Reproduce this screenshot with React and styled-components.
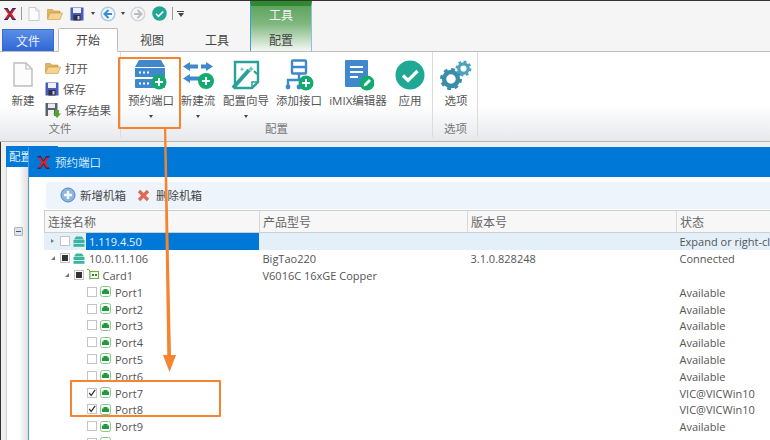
import React from "react";
import styled, { createGlobalStyle } from "styled-components";

const BLUE = "#0078d7";
const ORANGE = "#f6832f";
const GREEN = "#12ab6f";
const TEAL = "#1fa894";
const STEEL = "#3f88cc";

const GlobalStyle = createGlobalStyle`
  html, body {
    margin: 0;
    padding: 0;
    overflow: hidden;
    background: #fff;
  }
  * { box-sizing: border-box; }
`;

const Page = styled.div`
  position: relative;
  width: 770px;
  height: 440px;
  overflow: hidden;
  display: flex;
  flex-direction: column;
  font-family: "Open Sans", "Noto Sans CJK SC", sans-serif;
  font-size: 11.5px;
  color: #555;
`;

const TitleBar = styled.div`
  display: flex;
  height: 52px;
  flex: none;
  background: #f5f5f5;
  border-top: 1px solid #333;
  border-bottom: 1px solid #bdbdbd;
`;

const TitleLeft = styled.div`
  width: 250px;
  display: flex;
  flex-direction: column;
`;

const QuickAccess = styled.div`
  height: 27px;
  display: flex;
  align-items: center;
  padding: 0 0 2px 3px;
`;

const QuickItem = styled.span`
  display: flex;
  margin-left: ${(p) => p.$gap || 0}px;
`;

const QuickBar = styled.span`
  width: 1px;
  height: 13px;
  background: #999;
  margin-left: ${(p) => p.$gap}px;
`;

const Caret = styled.span`
  width: 0;
  height: 0;
  border-left: 2.5px solid transparent;
  border-right: 2.5px solid transparent;
  border-top: 3px solid #444;
  margin-left: ${(p) => p.$gap || 0}px;
`;

const QuickMenu = styled.span`
  display: flex;
  flex-direction: column;
  align-items: center;
  gap: 1px;
  margin-left: ${(p) => p.$gap}px;
  &::before {
    content: "";
    width: 7px;
    height: 1px;
    background: #444;
  }
  &::after {
    content: "";
    width: 0;
    height: 0;
    border-left: 3.5px solid transparent;
    border-right: 3.5px solid transparent;
    border-top: 4px solid #444;
  }
`;

const TabRow = styled.div`
  flex: 1;
  display: flex;
  align-items: flex-end;
  padding-left: 2px;
  margin-bottom: -1px;
`;

const FileTab = styled.div`
  width: 52px;
  height: 23px;
  display: flex;
  align-items: center;
  justify-content: center;
  color: #e8f0ff;
  font-size: 12px;
  background: linear-gradient(#5b8ee6, #2f66d8);
  border: 1px solid #3d6cc8;
  border-bottom: 1px solid #bdbdbd;
`;

const Tab = styled.div`
  width: ${(p) => p.$w}px;
  margin-left: ${(p) => p.$gap || 0}px;
  height: 24px;
  display: flex;
  align-items: center;
  justify-content: center;
  font-size: 12px;
  color: #444;
  ${(p) =>
    p.$active
      ? `background: #fff; border: 1px solid #bdbdbd; border-bottom: 1px solid #fff; border-radius: 2px 2px 0 0;`
      : ""}
`;

const ContextTab = styled.div`
  width: 62px;
  display: flex;
  flex-direction: column;
  align-items: center;
  border-left: 1px solid #3ba0d0;
  border-right: 1px solid #8cc4de;
  background: linear-gradient(#5fa35f 0, #7fb87f 40%, #f4f8f4 100%);
  border-top: 5px solid #2f8a2f;
  color: #444;
  font-size: 12px;
`;

const ContextTitle = styled.div`
  height: 18px;
  display: flex;
  align-items: center;
  color: #f2f6f2;
`;

const ContextName = styled.div`
  margin-top: 7px;
`;

const Ribbon = styled.div`
  height: 90px;
  flex: none;
  display: flex;
  background: linear-gradient(#fff 0, #fff 60%, #e6e8ec 100%);
  border-bottom: 1px solid #b5b5b5;
`;

const Group = styled.div`
  width: ${(p) => p.$w}px;
  flex: none;
  display: flex;
  flex-direction: column;
  align-items: center;
  margin-right: ${(p) => p.$gap || 0}px;
  padding-top: 4px;
  border-right: 1px solid #dcdcdf;
  margin-bottom: 4px;
`;

const GroupBody = styled.div`
  flex: 1;
  display: flex;
  width: 100%;
`;

const GroupLabel = styled.div`
  height: 15px;
  line-height: 14px;
  color: #777;
  text-align: center;
`;

const BigButton = styled.div`
  width: ${(p) => p.$w}px;
  flex: none;
  display: flex;
  flex-direction: column;
  align-items: center;
`;

const BigIcon = styled.div`
  height: 37px;
  display: flex;
  align-items: center;
  justify-content: center;
`;

const BigLabel = styled.div`
  white-space: nowrap;
  line-height: 16px;
  height: 16px;
`;

const BigCaret = styled(Caret)`
  margin-top: 6px;
`;

const SmallList = styled.div`
  display: flex;
  flex-direction: column;
  margin-top: 4px;
  gap: 5px;
  margin-left: -1px;
`;

const SmallButton = styled.div`
  height: 16px;
  display: flex;
  align-items: center;
  gap: 4px;
  white-space: nowrap;
`;

const Workspace = styled.div`
  position: relative;
  flex: 1;
  background: #efefef;
  padding: 4px 0 0 5px;
  border-left: 1px solid #333;
`;

const BackTab = styled.div`
  width: 52px;
  height: 21px;
  background: ${BLUE};
  color: #e6f1fb;
  padding: 2px 0 0 3px;
`;

const BackPanel = styled.div`
  height: 280px;
  width: 24px;
  background: linear-gradient(90deg, #fff 0, #fff 50%, #d8d8d8 100%);
  border-left: 1px solid #d0d0d0;
  display: flex;
  justify-content: center;
  padding-top: 60px;
`;

const Collapse = styled.span`
  width: 9px;
  height: 9px;
  border: 1px solid #aab4c0;
  border-radius: 1px;
  background: #dfe5ec;
  display: flex;
  align-items: center;
  justify-content: center;
  &::after {
    content: "";
    width: 5px;
    height: 1px;
    background: #556;
  }
`;

const Dialog = styled.div`
  position: absolute;
  left: 27px;
  top: 5px;
  right: 0;
  bottom: 0;
  background: #fff;
  border-left: 1px solid #4a9be0;
  display: flex;
  flex-direction: column;
`;

const DialogHeader = styled.div`
  height: 30px;
  flex: none;
  background: ${BLUE};
  display: flex;
  align-items: center;
  gap: 4px;
  padding-left: 7px;
  color: #d6e8f8;
`;

const DialogBody = styled.div`
  flex: 1;
  display: flex;
  flex-direction: column;
  padding: 5px 0 0 15px;
`;

const Toolbar = styled.div`
  height: 27px;
  flex: none;
  margin-left: 2px;
  background: #edf4fc;
  border-radius: 4px 0 0 4px;
  display: flex;
  align-items: center;
  padding: 0 0 1px 14px;
  color: #444;
`;

const ToolButton = styled.div`
  display: flex;
  align-items: center;
  gap: ${(p) => p.$iconGap}px;
  margin-right: 11px;
  white-space: nowrap;
`;

const Grid = styled.div`
  flex: 1;
  margin-top: 1px;
  overflow: hidden;
`;

const HeaderRow = styled.div`
  height: 23px;
  display: flex;
  background: #f7f7f7;
  border-top: 1px solid #cfcfcf;
  border-bottom: 1px solid #cfcfcf;
  border-left: 1px solid #cfcfcf;
  color: #666;
  font-size: 12px;
`;

const HeaderCell = styled.div`
  width: ${(p) => p.$w}px;
  flex: none;
  display: flex;
  align-items: center;
  padding-left: 3px;
  border-right: 1px solid #d8d8d8;
`;

const Row = styled.div`
  height: 16.8px;
  display: flex;
  align-items: center;
  white-space: nowrap;
  font-size: 11px;
  background: ${(p) => (p.$selected ? "#e3f0fa" : "#fff")};
`;

const NameCell = styled.div`
  width: 215px;
  height: 100%;
  flex: none;
  display: flex;
  align-items: center;
  padding-left: ${(p) => p.$level * 13.5 + 4}px;
`;

const Expander = styled.span`
  width: 9px;
  flex: none;
  display: flex;
  justify-content: center;
  ${(p) => (p.$hidden ? "visibility: hidden;" : "")}
  &::after {
    content: "";
    width: 0;
    height: 0;
    ${(p) =>
      p.$open
        ? `border-bottom: 4px solid #777; border-left: 4px solid transparent; margin-left: 1px;`
        : `border-left: 3px solid #777; border-top: 2.5px solid transparent; border-bottom: 2.5px solid transparent;`}
  }
`;

const Check = styled.span`
  width: 10px;
  height: 10px;
  flex: none;
  margin-left: 3px;
  border: 1px solid #c4c4c4;
  background: #fff;
  display: flex;
  align-items: center;
  justify-content: center;
  ${(p) =>
    p.$state === "partial"
      ? `&::after { content: ""; width: 6px; height: 6px; background: #333; }`
      : ""}
`;

const NodeIcon = styled.span`
  display: flex;
  margin-left: 3px;
`;

const NodeName = styled.span`
  margin-left: 1px;
  padding: 1px 3px 0;
  height: 100%;
  flex: ${(p) => (p.$selected ? 1 : "none")};
  display: flex;
  align-items: center;
  ${(p) => (p.$selected ? `background: ${BLUE}; color: #e8f2fb;` : "")}
`;

const TextCell = styled.div`
  width: ${(p) => p.$w}px;
  flex: none;
  padding: 1px 0 0 3.5px;
`;

const HighlightBox = styled.div`
  position: absolute;
  left: ${(p) => p.$x}px;
  top: ${(p) => p.$y}px;
  width: ${(p) => p.$w}px;
  height: ${(p) => p.$h}px;
  border: 2px solid ${ORANGE};
  border-radius: 1px;
  pointer-events: none;
`;

const ArrowLayer = styled.svg`
  position: absolute;
  left: 0;
  top: 0;
  pointer-events: none;
`;

/* icons */
const Svg = ({ w, h = w, children }) => (
  <svg width={w} height={h} viewBox={`0 0 ${w} ${h}`} fill="none">
    {children}
  </svg>
);

const LogoIcon = ({ size = 14 }) => (
  <svg width={size} height={size} viewBox="0 0 14 14">
    <path d="M1 1h3.4l2.6 4 2.6-4H13L9 7l4 6H9.6L7 9l-2.6 4H1l4-6z" fill="#d8232a" />
    <path d="M1 1h3.4L7 5l2.6-4H13l-.9 1.3H9.8L7 6.4 4.2 2.3H1.9zM1 13h3.4L7 9l2.6 4H13l-.9-1.3H9.8L7 7.6l-2.8 4.1H1.9z" fill="#1d2f6f" />
  </svg>
);

const DocIcon = ({ w, h }) => (
  <svg width={w} height={h} viewBox="0 0 20 25" fill="none">
    <path d="M1 1h12l6 6v17H1z" fill="#fcfcfc" stroke="#bdbdbd" strokeWidth="1.4" />
    <path d="M13 1v6h6" stroke="#bdbdbd" strokeWidth="1.2" />
  </svg>
);

const FolderIcon = ({ w, h }) => (
  <svg width={w} height={h} viewBox="0 0 16 12">
    <path d="M0.5 1.5h5l1.5 1.5h6v2H3L0.5 10.5z" fill="#e2b566" stroke="#c79540" strokeWidth="0.6" />
    <path d="M3 5h12.5l-2.5 6.5H0.5z" fill="#f4d48f" stroke="#c79540" strokeWidth="0.6" />
  </svg>
);

const SaveIcon = ({ s = 14 }) => (
  <svg width={s} height={s} viewBox="0 0 14 14">
    <rect x="0.5" y="0.5" width="13" height="13" fill="#4a5db5" />
    <rect x="3" y="1" width="8" height="5" fill="#eef1fb" />
    <rect x="3.5" y="8" width="7" height="5.5" fill="#2d2f45" />
    <rect x="7.5" y="9" width="2" height="3.5" fill="#c9cfe8" />
  </svg>
);

const SaveAsIcon = () => (
  <svg width="16" height="16" viewBox="0 0 16 16">
    <rect x="0.5" y="1" width="12" height="13" fill="#59626f" />
    <rect x="3" y="1.5" width="7" height="4.5" fill="#e9ebee" />
    <rect x="3" y="8" width="6" height="6" fill="#eef0f2" />
    <path d="M10 8h4v3.5h2L12 16l-4-4.5h2z" fill="#55a332" />
  </svg>
);

const NavIcon = ({ color, ring, back }) => (
  <Svg w={16}>
    <circle cx="8" cy="8" r="6.8" fill="#f4f8fc" stroke={ring} strokeWidth="1.6" />
    <path
      d={back ? "M8.5 4L4.5 8l4 4M4.8 8H12" : "M7.5 4l4 4-4 4M11.2 8H4"}
      stroke={color}
      strokeWidth="2"
    />
  </Svg>
);

const CheckCircle = ({ s }) => (
  <svg width={s} height={s} viewBox="0 0 30 30">
    <circle cx="15" cy="15" r="14.5" fill={TEAL} />
    <path d="M8 15.5l5 5 9.5-9.5" stroke="#fff" strokeWidth="3.2" fill="none" />
  </svg>
);

const PlusBadge = ({ cx, cy, r = 7.5 }) => (
  <g>
    <circle cx={cx} cy={cy} r={r} fill={GREEN} />
    <path d={`M${cx - 4} ${cy}h8M${cx} ${cy - 4}v8`} stroke="#fff" strokeWidth="2" />
  </g>
);

const ServerIcon = () => (
  <Svg w={34} h={32}>
    <path d="M5 1h22l4 7H1z" fill={STEEL} />
    <rect x="1" y="9" width="30" height="9" fill={STEEL} />
    <rect x="1" y="20" width="30" height="9" rx="1" fill={STEEL} />
    <path d="M5 13.5h2M9 13.5h2M13 13.5h2M5 24.5h2M9 24.5h2M13 24.5h2" stroke="#fff" strokeWidth="2" />
    <PlusBadge cx={25} cy={23} />
  </Svg>
);

const FlowIcon = () => (
  <Svg w={32} h={30}>
    <path d="M8 2L1 6.5 8 11V8.5h8v-4H8z" fill={STEEL} />
    <path d="M24 2l7 4.5-7 4.5V8.5h-5v-4h5z" fill={STEEL} />
    <path d="M8 14l-7 4.5L8 23v-2.5h10v-4H8z" fill={STEEL} />
    <PlusBadge cx={24} cy={21} r={8} />
  </Svg>
);

const WizardIcon = () => (
  <Svg w={30} h={30}>
    <path d="M4 2h23v20l-6 6H4z" stroke="#2aa198" strokeWidth="2.4" fill="#fff" />
    <path d="M21 28v-6h6" stroke="#2aa198" strokeWidth="1.5" />
    <path d="M2 28L18 10" stroke="#2aa198" strokeWidth="4" />
    <path d="M20 6l1 2 2 1-2 1-1 2-1-2-2-1 2-1zM11 7l.7 1.5 1.5.7-1.5.7L11 11.4l-.7-1.5-1.5-.7 1.5-.7z" fill="#6cc3ba" />
    <path d="M23 11l3 3" stroke="#2aa198" strokeWidth="2" />
  </Svg>
);

const PortMapIcon = () => (
  <Svg w={30} h={32}>
    <rect x="8" y="1.5" width="14" height="13" rx="1" stroke={STEEL} strokeWidth="2.4" />
    <path d="M8 8h14M15 15v6M4 27v-6h20v3" stroke={STEEL} strokeWidth="2.4" />
    <circle cx="4" cy="28" r="2.4" fill={STEEL} />
    <circle cx="15" cy="28" r="2.4" fill={STEEL} />
    <PlusBadge cx={22} cy={24} />
  </Svg>
);

const EditorIcon = () => (
  <Svg w={32} h={32}>
    <rect x="3" y="1" width="23" height="27" rx="1" fill={STEEL} />
    <path d="M8 8h13M8 13h13M8 18h8" stroke="#fff" strokeWidth="2" />
    <circle cx="25" cy="24" r="7.5" fill={GREEN} />
    <path d="M21.5 27.5l1-3 4.5-4.5 2 2-4.5 4.5z" fill="#fff" />
  </Svg>
);

const GearsIcon = () => (
  <Svg w={32} h={30}>
    <circle cx="11" cy="19" r="7" stroke="#3a8dab" strokeWidth="4.5" />
    <circle cx="11" cy="19" r="9.5" stroke="#3a8dab" strokeWidth="3" strokeDasharray="3.7 3.75" />
    <circle cx="23.5" cy="8.5" r="4.7" stroke="#4aa3bd" strokeWidth="3.2" />
    <circle cx="23.5" cy="8.5" r="6.8" stroke="#4aa3bd" strokeWidth="2.4" strokeDasharray="2.7 2.64" />
  </Svg>
);

const AddCircleIcon = () => (
  <Svg w={16}>
    <circle cx="8" cy="8" r="7" fill="#8fb6de" stroke="#4d86c0" />
    <path d="M8 4v8M4 8h8" stroke="#f4f8fc" strokeWidth="2.4" />
  </Svg>
);

const RemoveIcon = () => (
  <Svg w={13}>
    <path d="M2 2l9 9M11 2l-9 9" stroke="#dd6b55" strokeWidth="3.4" />
  </Svg>
);

const ChassisIcon = () => (
  <Svg w={12} h={11}>
    <path d="M3 .5h6l2 3H1z" fill="#3cb5a0" />
    <rect x="0.5" y="4" width="11" height="3" fill="#3cb5a0" />
    <rect x="0.5" y="7.8" width="11" height="3" fill="#3cb5a0" />
  </Svg>
);

const CardIcon = () => (
  <Svg w={12} h={12}>
    <path d="M0 .5h2l1 2v8" stroke="#6db04a" />
    <rect x="3" y="2.5" width="8.5" height="7" stroke="#6db04a" fill="#f2faf0" />
    <rect x="5" y="5" width="2" height="2" fill="#2f8a3b" />
    <rect x="8" y="5" width="2" height="2" fill="#2f8a3b" />
  </Svg>
);

const PortIcon = () => (
  <Svg w={11}>
    <rect x="0.5" y="0.5" width="10" height="10" rx="2" stroke="#86c78c" fill="#fff" />
    <path d="M3.5 3h4v1.4H9V8H2V4.4h1.5z" fill="#1f9a3c" />
  </Svg>
);

const RowCheck = () => (
  <svg width="10" height="10" viewBox="0 0 10 10">
    <path d="M1.5 5l2.5 3 5-7" stroke="#333" strokeWidth="1.5" fill="none" />
  </svg>
);

const rows = [
  { id: "a", level: 0, kind: "chassis", name: "1.119.4.50", selected: true, status: "Expand or right-click to connect" },
  { id: "b", level: 0, kind: "chassis", open: true, check: "partial", name: "10.0.11.106", product: "BigTao220", version: "3.1.0.828248", status: "Connected" },
  { id: "c", level: 1, kind: "card", open: true, check: "partial", name: "Card1", product: "V6016C 16xGE Copper" },
  ...["1", "2", "3", "4", "5", "6"].map((n) => ({ id: n, level: 2, name: `Port${n}`, status: "Available" })),
  { id: "7", level: 2, name: "Port7", check: "on", status: "VIC@VICWin10" },
  { id: "8", level: 2, name: "Port8", check: "on", status: "VIC@VICWin10" },
  { id: "9", level: 2, name: "Port9", status: "Available" },
  { id: "10", level: 2 },
];

const TreeRow = ({ row }) => {
  const isPort = row.level === 2;
  return (
    <Row $selected={row.selected}>
      <NameCell $level={row.level}>
        <Expander $open={row.open} $hidden={isPort} />
        <Check $state={row.check}>{row.check === "on" && <RowCheck />}</Check>
        <NodeIcon>
          {row.kind === "chassis" && <ChassisIcon />}
          {row.kind === "card" && <CardIcon />}
          {isPort && <PortIcon />}
        </NodeIcon>
        <NodeName $selected={row.selected}>{row.name}</NodeName>
      </NameCell>
      <TextCell $w={208}>{row.product}</TextCell>
      <TextCell $w={209}>{row.version}</TextCell>
      <TextCell $w={100}>{row.status}</TextCell>
    </Row>
  );
};

const configButtons = [
  { label: "预约端口", w: 60, caret: true, icon: <ServerIcon /> },
  { label: "新建流", w: 34, caret: true, icon: <FlowIcon /> },
  { label: "配置向导", w: 62, caret: true, icon: <WizardIcon /> },
  { label: "添加接口", w: 44, icon: <PortMapIcon /> },
  { label: "iMIX编辑器", w: 74, icon: <EditorIcon /> },
  { label: "应用", w: 30, icon: <CheckCircle s={30} /> },
];

export default function App() {
  return (
    <Page>
      <GlobalStyle />
      <TitleBar>
        <TitleLeft>
          <QuickAccess>
            <QuickItem><LogoIcon /></QuickItem>
            <QuickBar $gap={4} />
            <QuickItem $gap={6}><DocIcon w={12} h={14} /></QuickItem>
            <QuickItem $gap={7}><FolderIcon w={16} h={12} /></QuickItem>
            <QuickItem $gap={7}><SaveIcon /></QuickItem>
            <Caret $gap={7} />
            <QuickItem $gap={5}><NavIcon color="#3a8ed0" ring="#a9cdea" back /></QuickItem>
            <Caret $gap={5} />
            <QuickItem $gap={5}><NavIcon color="#bdbdbd" ring="#d6d6d6" /></QuickItem>
            <QuickItem $gap={6}><CheckCircle s={15} /></QuickItem>
            <QuickBar $gap={5} />
            <QuickMenu $gap={4} />
          </QuickAccess>
          <TabRow>
            <FileTab>文件</FileTab>
            <Tab $active $w={60} $gap={4}>开始</Tab>
            <Tab $w={68}>视图</Tab>
            <Tab $w={62}>工具</Tab>
          </TabRow>
        </TitleLeft>
        <ContextTab>
          <ContextTitle>工具</ContextTitle>
          <ContextName>配置</ContextName>
        </ContextTab>
      </TitleBar>

      <Ribbon>
        <Group $w={121}>
          <GroupBody>
            <BigButton $w={46}>
              <BigIcon><DocIcon w={20} h={25} /></BigIcon>
              <BigLabel>新建</BigLabel>
            </BigButton>
            <SmallList>
              <SmallButton><FolderIcon w={16} h={12} />打开</SmallButton>
              <SmallButton><SaveIcon />保存</SmallButton>
              <SmallButton><SaveAsIcon />保存结果</SmallButton>
            </SmallList>
          </GroupBody>
          <GroupLabel>文件</GroupLabel>
        </Group>
        <Group $w={312} $gap={1}>
          <GroupBody>
            {configButtons.map((b) => (
              <BigButton key={b.label} $w={b.w}>
                <BigIcon>{b.icon}</BigIcon>
                <BigLabel>{b.label}</BigLabel>
                {b.caret && <BigCaret />}
              </BigButton>
            ))}
          </GroupBody>
          <GroupLabel>配置</GroupLabel>
        </Group>
        <Group $w={44}>
          <GroupBody>
            <BigButton $w={44}>
              <BigIcon><GearsIcon /></BigIcon>
              <BigLabel>选项</BigLabel>
            </BigButton>
          </GroupBody>
          <GroupLabel>选项</GroupLabel>
        </Group>
      </Ribbon>

      <Workspace>
        <BackTab>配置</BackTab>
        <BackPanel><Collapse /></BackPanel>
        <Dialog>
          <DialogHeader>
            <LogoIcon size={15} />
            预约端口
          </DialogHeader>
          <DialogBody>
            <Toolbar>
              <ToolButton $iconGap={4}><AddCircleIcon />新增机箱</ToolButton>
              <ToolButton $iconGap={6}><RemoveIcon />删除机箱</ToolButton>
            </Toolbar>
            <Grid>
              <HeaderRow>
                <HeaderCell $w={215}>连接名称</HeaderCell>
                <HeaderCell $w={208}>产品型号</HeaderCell>
                <HeaderCell $w={209}>版本号</HeaderCell>
                <HeaderCell $w={100}>状态</HeaderCell>
              </HeaderRow>
              {rows.map((row) => (
                <TreeRow key={row.id} row={row} />
              ))}
            </Grid>
          </DialogBody>
        </Dialog>
      </Workspace>

      <HighlightBox $x={118} $y={57} $w={63} $h={72} />
      <HighlightBox $x={70} $y={380} $w={151} $h={37} />
      <ArrowLayer width="770" height="440">
        <path d="M164 129L166.2 129L171 356L167.3 356Z" fill={ORANGE} />
        <path d="M163 355L176 355L169.5 372Z" fill={ORANGE} />
      </ArrowLayer>
    </Page>
  );
}
